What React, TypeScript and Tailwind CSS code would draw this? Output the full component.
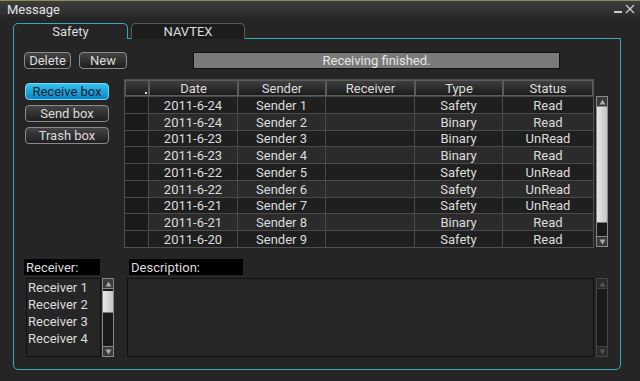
import React from 'react';

const rows = [
  ['2011-6-24', 'Sender 1', 'Safety', 'Read'],
  ['2011-6-24', 'Sender 2', 'Binary', 'Read'],
  ['2011-6-23', 'Sender 3', 'Binary', 'UnRead'],
  ['2011-6-23', 'Sender 4', 'Binary', 'Read'],
  ['2011-6-22', 'Sender 5', 'Safety', 'UnRead'],
  ['2011-6-22', 'Sender 6', 'Safety', 'UnRead'],
  ['2011-6-21', 'Sender 7', 'Safety', 'UnRead'],
  ['2011-6-21', 'Sender 8', 'Binary', 'Read'],
  ['2011-6-20', 'Sender 9', 'Safety', 'Read'],
];

const Btn = ({ label, w }: { label: string; w: string }) => (
  <div
    className={`${w} h-[17px] flex items-center justify-center rounded-[4px] border border-[#8a8a8a] bg-gradient-to-b from-[#454545] to-[#1e1e1e] text-[#dcdcdc] leading-none`}
  >
    {label}
  </div>
);

const Arrow = ({ up, dim }: { up?: boolean; dim?: boolean }) => (
  <div
    className={`h-[11px] flex items-center justify-center border-b border-t ${
      dim ? 'border-[#444] bg-[#2a2a2a]' : 'border-[#888] bg-[#3a3a3a]'
    }`}
  >
    <svg width="7" height="6" viewBox="0 0 7 6">
      <polygon
        points={up ? '3.5,0.5 6.5,5.5 0.5,5.5' : '0.5,0.5 6.5,0.5 3.5,5.5'}
        fill={dim ? '#555' : '#a8a8a8'}
      />
    </svg>
  </div>
);

const ScrollBar = ({ h, thumb, gapTop, dim }: { h: string; thumb: string; gapTop: string; dim?: boolean }) => (
  <div className={`w-[12px] ${h} flex flex-col border-x ${dim ? 'border-[#444]' : 'border-[#888]'} bg-[#1a1a1a]`}>
    <Arrow up dim={dim} />
    <div className="flex-1 flex flex-col">
      {!dim && <div className={`${gapTop}`} />}
      {!dim && <div className={`${thumb} bg-gradient-to-r from-[#e8e8e8] to-[#c4c4c4] border-b border-[#777]`} />}
    </div>
    <Arrow dim={dim} />
  </div>
);

const App = (): React.ReactElement => {
  return (
    <div
      className="w-[640px] h-[381px] bg-[#252525] flex flex-col overflow-hidden text-[13px] text-[#dcdcdc]"
      style={{ fontFamily: 'Roboto, "Noto Sans", sans-serif' }}
    >
      {/* title bar */}
      <div className="h-[17px] border-t border-[#8d8f4a] bg-gradient-to-b from-[#3d3d3d] to-[#2b2b2b] flex items-center pl-[7px] pr-[5px]">
        <span className="text-[#e2e2e2] leading-none">Message</span>
        <div className="ml-auto flex items-center gap-[3px] text-[#cfcfcf]">
          <div className="w-[8px] h-[2px] bg-[#cfcfcf] mt-[6px]" />
          <svg width="10" height="10" viewBox="0 0 10 10">
            <path d="M1 1L9 9M9 1L1 9" stroke="#d0d0d0" strokeWidth="1.2" />
          </svg>
        </div>
      </div>

      {/* tabs */}
      <div className="mt-[6px] ml-[13px] flex items-end h-[16px] gap-[3px] relative z-10">
        <div className="w-[115px] h-[16px] border border-b-0 border-[#3aa6be] rounded-t-[5px] bg-[#252525] flex items-center justify-center leading-none">
          Safety
        </div>
        <div className="w-[114px] h-[16px] border border-b-0 border-[#5a5a5a] rounded-t-[5px] bg-[#1c1c1c] flex items-center justify-center leading-none">
          NAVTEX
        </div>
      </div>

      {/* panel */}
      <div className="ml-[13px] w-[608px] h-[332px] border border-[#3aa6be] rounded-b-[5px] -mt-px pl-[10px] pt-[13px] flex flex-col">
        <div className="flex items-center h-[17px]">
          <Btn label="Delete" w="w-[47px]" />
          <div className="ml-[8px]">
            <Btn label="New" w="w-[48px]" />
          </div>
          <div className="ml-[66px] w-[367px] h-[17px] bg-[#7a7a7a] border border-[#111] flex items-center justify-center text-[#e4e4e4] leading-none">
            Receiving finished.
          </div>
        </div>

        <div className="mt-[10px] flex">
          <div className="w-[100px] pt-[4px] pl-px flex flex-col gap-[5px]">
            <div className="w-[84px] h-[17px] rounded-[4px] border border-[#7fd6f2] bg-gradient-to-b from-[#34c2f0] to-[#0a86c4] flex items-center justify-center text-[#0b2233] leading-none">
              Receive box
            </div>
            <Btn label="Send box" w="w-[84px]" />
            <Btn label="Trash box" w="w-[84px]" />
          </div>

          <div className="flex flex-col">
            <div className="w-[470px] border border-[#505050]">
              <div className="grid grid-cols-[24px_89px_88px_89px_88px_90px] h-[16px]">
                {['', 'Date', 'Sender', 'Receiver', 'Type', 'Status'].map((h, i) => (
                  <div
                    key={i}
                    className="relative border border-[#5c5c5c] bg-gradient-to-b from-[#3e3e3e] to-[#1c1c1c] flex items-center justify-center leading-none"
                  >
                    {h}
                    {i === 0 && <div className="absolute right-[1px] bottom-[1px] w-[2px] h-[2px] bg-[#e0e0e0]" />}
                  </div>
                ))}
              </div>
              {rows.map((r, i) => (
                <div
                  key={i}
                  className={`grid grid-cols-[24px_89px_88px_89px_88px_90px] ${
                    i === 2 || i === 6 ? 'h-[16px]' : 'h-[17px]'
                  } border-t border-[#4a4a4a] ${i % 2 === 0 ? 'bg-[#1f1f1f]' : 'bg-[#2b2b2b]'}`}
                >
                  <div className="bg-[#1a1a1a] border-r border-[#4a4a4a]" />
                  <div className="border-r border-[#4a4a4a] flex items-center justify-center leading-none">{r[0]}</div>
                  <div className="border-r border-[#4a4a4a] flex items-center justify-center leading-none">{r[1]}</div>
                  <div className="border-r border-[#4a4a4a]" />
                  <div className="border-r border-[#4a4a4a] flex items-center justify-center leading-none">{r[2]}</div>
                  <div className="flex items-center justify-center leading-none">{r[3]}</div>
                </div>
              ))}
            </div>
          </div>
          <div className="ml-[2px] mt-[17px]">
            <ScrollBar h="h-[151px]" gapTop="h-0" thumb="h-[116px]" />
          </div>
        </div>

        <div className="mt-[11px] flex h-[16px]">
          <div className="w-[76px] bg-black pl-[2px] flex items-center leading-none">Receiver:</div>
          <div className="ml-[29px] w-[114px] bg-black pl-[2px] flex items-center leading-none">Description:</div>
        </div>

        <div className="mt-[3px] flex h-[79px] pl-[2px]">
          <div className="w-[75px] border border-[#111] bg-[#262626] pl-[1px] flex flex-col leading-[17px]">
            <span>Receiver 1</span>
            <span>Receiver 2</span>
            <span>Receiver 3</span>
            <span>Receiver 4</span>
          </div>
          <div className="ml-px">
            <ScrollBar h="h-[79px]" gapTop="h-[2px]" thumb="h-[22px]" />
          </div>
          <div className="ml-[13px] w-[467px] border border-[#111] bg-[#262626]" />
          <div className="ml-[2px]">
            <ScrollBar h="h-[79px]" gapTop="h-0" thumb="h-0" dim />
          </div>
        </div>
      </div>
    </div>
  );
};

export default App;
